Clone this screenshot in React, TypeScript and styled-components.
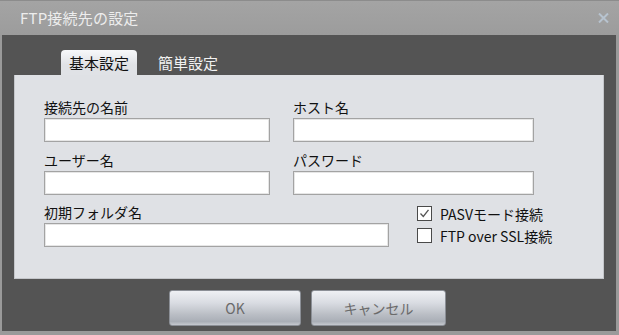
import React from "react";
import styled, { createGlobalStyle } from "styled-components";

const GlobalStyle = createGlobalStyle`
  html, body {
    margin: 0;
    padding: 0;
    background: #999999;
  }
  body {
    font-family: "Noto Sans CJK JP", "Noto Sans", sans-serif;
  }
`;

const Window = styled.div`
  width: 619px;
  height: 335px;
  display: flex;
  flex-direction: column;
  background: #9a9a9a;
  box-sizing: border-box;
`;

const TitleBar = styled.div`
  height: 35px;
  flex: none;
  display: flex;
  align-items: center;
  justify-content: space-between;
  padding: 0 10px 0 20px;
  background: linear-gradient(#a4a4a4, #9c9c9c);
  border-top: 1px solid #8c8c8c;
  box-sizing: border-box;
`;

const Title = styled.span`
  color: #ededed;
  font-size: 15px;
  line-height: 20px;
  letter-spacing: 0.2px;
`;

const Close = styled.span`
  display: flex;
  align-items: center;
  justify-content: center;
  width: 12px;
  height: 12px;
`;

const Body = styled.div`
  flex: 1;
  margin: 0 3px 4px 2px;
  background: #545454;
  padding: 15px 12px 0 12px;
  display: flex;
  flex-direction: column;
`;

const TabRow = styled.div`
  display: flex;
  align-items: flex-end;
  height: 25px;
  padding-left: 47px;
  gap: 10px;
`;

const Tab = styled.div<{ active?: boolean }>`
  height: 25px;
  width: ${(p) => (p.active ? "76px" : "auto")};
  padding: ${(p) => (p.active ? "0" : "0 11px")};
  display: flex;
  align-items: center;
  justify-content: center;
  font-size: 15px;
  color: ${(p) => (p.active ? "#111" : "#f2f2f2")};
  background: ${(p) =>
    p.active ? "linear-gradient(#f7f8fa, #e0e2e6 60%)" : "transparent"};
  border-radius: 4px 4px 0 0;
  box-sizing: border-box;
`;

const Panel = styled.div`
  height: 204px;
  background: #dfe1e5;
  border: 1px solid #c4c6ca;
  border-top: none;
  box-sizing: border-box;
  padding: 22px 0 0 29px;
  display: flex;
  flex-direction: column;
`;

const FieldGrid = styled.div`
  display: grid;
  grid-template-columns: 226px 241px;
  column-gap: 23px;
  row-gap: 8px;
`;

const Field = styled.div<{ w?: number }>`
  display: flex;
  flex-direction: column;
  width: ${(p) => (p.w ? `${p.w}px` : "auto")};
`;

const Label = styled.label`
  font-size: 14px;
  line-height: 20px;
  height: 20px;
  color: #111;
  margin-bottom: 1px;
`;

const Input = styled.input`
  height: 24px;
  width: 100%;
  box-sizing: border-box;
  border: 1px solid #a3a3a3;
  box-shadow: inset 0 0 0 1px #e6e6e6;
  background: #fff;
  margin: 0;
  outline: none;
`;

const BottomRow = styled.div`
  display: flex;
  margin-top: 7px;
`;

const CheckGroup = styled.div`
  display: flex;
  flex-direction: column;
  gap: 7px;
  margin-left: 28px;
  padding-top: 4px;
`;

const CheckItem = styled.div`
  display: flex;
  align-items: center;
  gap: 8px;
  height: 15px;
  font-size: 14px;
  color: #111;
`;

const Box = styled.span`
  width: 15px;
  height: 15px;
  box-sizing: border-box;
  border: 1px solid #4a4a4a;
  background: #fff;
  display: flex;
  align-items: center;
  justify-content: center;
`;

const Buttons = styled.div`
  display: flex;
  justify-content: center;
  gap: 10px;
  margin-top: 11px;
  padding-right: 3px;
`;

const Button = styled.button<{ w: number }>`
  width: ${(p) => p.w}px;
  height: 36px;
  border: 1px solid #8b8f96;
  border-radius: 3px;
  background: linear-gradient(
    #eef0f4 0%,
    #d9dce2 35%,
    #b9bdc4 70%,
    #a9aeb6 90%,
    #c6c9cf 100%
  );
  color: #6a6a6a;
  font-family: "Noto Sans CJK JP", "Noto Sans", sans-serif;
  font-size: 14px;
  padding: 0;
`;

const Check = ({ checked, label }: { checked?: boolean; label: string }) => (
  <CheckItem>
    <Box>
      {checked && (
        <svg width="11" height="11" viewBox="0 0 11 11">
          <path d="M1.5 5.5 L4.3 8.5 L9.5 1.8" fill="none" stroke="#555" strokeWidth="1.3" />
        </svg>
      )}
    </Box>
    <span>{label}</span>
  </CheckItem>
);

const App = () => {
  return (
    <>
      <GlobalStyle />
      <Window>
        <TitleBar>
          <Title>FTP接続先の設定</Title>
          <Close>
            <svg width="11" height="10" viewBox="0 0 11 10">
              <path d="M1 0.5 L10 9.5 M10 0.5 L1 9.5" stroke="#b7c3cf" strokeWidth="2" />
            </svg>
          </Close>
        </TitleBar>
        <Body>
          <TabRow>
            <Tab active>基本設定</Tab>
            <Tab>簡単設定</Tab>
          </TabRow>
          <Panel>
            <FieldGrid>
              <Field>
                <Label>接続先の名前</Label>
                <Input />
              </Field>
              <Field>
                <Label>ホスト名</Label>
                <Input />
              </Field>
              <Field>
                <Label>ユーザー名</Label>
                <Input />
              </Field>
              <Field>
                <Label>パスワード</Label>
                <Input />
              </Field>
            </FieldGrid>
            <BottomRow>
              <Field w={345}>
                <Label>初期フォルダ名</Label>
                <Input />
              </Field>
              <CheckGroup>
                <Check checked label="PASVモード接続" />
                <Check label="FTP over SSL接続" />
              </CheckGroup>
            </BottomRow>
          </Panel>
          <Buttons>
            <Button w={132}>OK</Button>
            <Button w={135}>キャンセル</Button>
          </Buttons>
        </Body>
      </Window>
    </>
  );
};

export default App;
